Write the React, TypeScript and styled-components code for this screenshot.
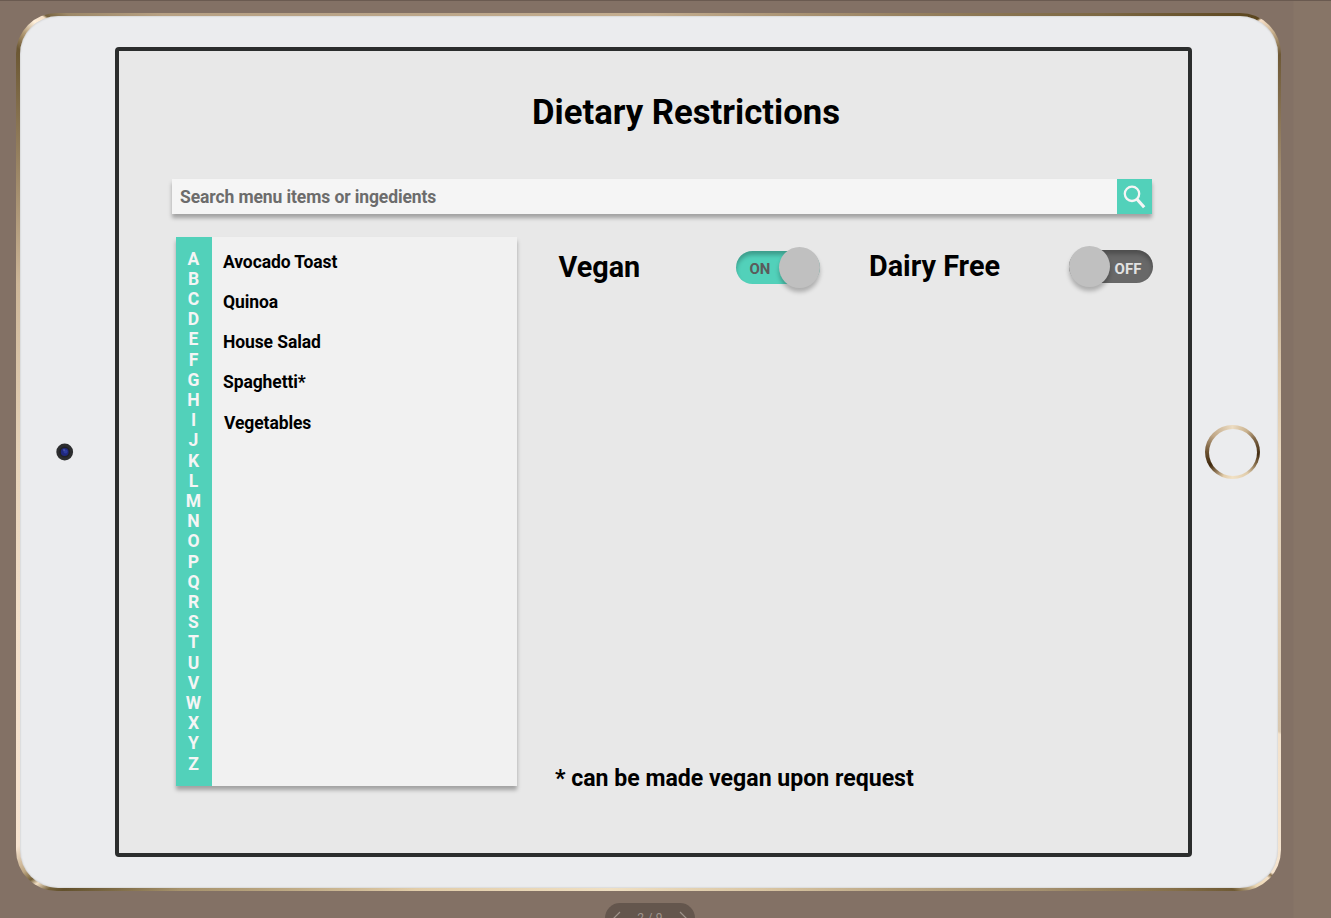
import React from "react";
import styled, { createGlobalStyle } from "styled-components";

const Global = createGlobalStyle`
  * { box-sizing: border-box; }
  html, body { margin: 0; padding: 0; overflow: hidden; }
  body { font-family: Roboto, "Liberation Sans", sans-serif; }
`;

const Page = styled.main`
  position: relative;
  height: 918px;
  padding: 12px 0 0 16px;
  overflow: hidden;
  border-top: 1px solid #6a5a50;
  background: linear-gradient(90deg, #837165 0 1293px, #877567 1294px);
`;

const Device = styled.div`
  width: 1265px;
  height: 878px;
  padding: 3px 3px 3px 4px;
  border-radius: 41px;
  background: conic-gradient(
    #c4ae90 0deg, #a08a6a 25deg, #7c6844 46deg, #5c4720 54.2deg, #5c4720 54.6deg, #f6dfc8 54.8deg, #cdb593 56deg,
    #6e5936 57.8deg, #a18c70 66deg, #d9c5a8 82deg, #ead8be 90deg, #d9c8b0 113.9deg,
    #f3e2cc 114.1deg, #f5e4cf 124deg, #8b7350 124.2deg, #f3dfc4 124.5deg, #ecd8b5 125.5deg, #6f5a34 126.8deg, #86704a 130deg,
    #a4906f 138deg, #d9c5a2 165deg, #efdfc2 185deg, #e2cda9 208deg, #a6926c 227deg, #62502c 233.2deg,
    #73603a 233.9deg, #f3e0c5 234.8deg, #75613a 235.3deg, #bda682 236.1deg, #f7e3cf 238deg, #f3dfc9 255deg, #e6d2b8 270deg, #cdb698 285deg,
    #8b7655 297deg, #6b5733 302.6deg, #b49c77 303.9deg, #fff0dc 305deg, #f4dfc6 305.7deg, #75613d 305.9deg, #9c8868 307deg, #b7a184 312deg, #b9a488 325deg, #c4ae90 360deg
  );
`;

const Face = styled.div`
  display: grid;
  grid-template-columns: 95px 1077px 1fr;
  height: 100%;
  padding-top: 31px;
  border-radius: 38px;
  background: #ebecee;
  box-shadow: inset 0 0 2px #b7b7b7;
`;

const Side = styled.div<{ $left: number; $top: number }>`
  padding: ${(p) => p.$top}px 0 0 ${(p) => p.$left}px;
  svg { display: block; }
`;

const HomeButton = styled.div`
  width: 55px;
  height: 54px;
  padding: 3.5px;
  border-radius: 50%;
  background: conic-gradient(#ecdcc2 0deg, #c8b08c 35deg, #7e6546 60deg, #432d12 95deg, #8b7250 120deg, #e0ccab 145deg, #f1e1c5 180deg, #e3cdaa 200deg, #8d7454 220deg, #3f290e 240deg, #6b5130 270deg, #c0a787 310deg, #ecdcc2 360deg);
  &::before {
    content: "";
    display: block;
    height: 100%;
    border-radius: 50%;
    background: #ebecee;
  }
`;

const Screen = styled.section`
  height: 810px;
  padding: 0 36px 0 53px;
  border: 4px solid #2b2d2d;
  border-radius: 4px;
  background: #e8e8e8;
`;

const Title = styled.h1`
  margin: 0 0 0 -7px;
  padding: 40px 0 0 55px;
  height: 128px;
  font-size: 34.7px;
  font-weight: 700;
  line-height: 42px;
  text-align: center;
  white-space: nowrap;
`;

const SearchBar = styled.div`
  display: flex;
  height: 34.5px;
  background: #f5f5f5;
  box-shadow: 0 4px 4px rgba(0, 0, 0, 0.3);
`;

const SearchInput = styled.input`
  flex: 1;
  min-width: 0;
  padding: 2px 8px 0;
  border: 0;
  background: transparent;
  font: 700 17.5px Roboto, sans-serif;
  letter-spacing: -0.1px;
  &::placeholder { color: #6c6c6c; opacity: 1; }
`;

const SearchButton = styled.button`
  width: 35px;
  padding: 0;
  border: 0;
  background: #52d1ba;
  svg { display: block; }
`;

const Content = styled.div`
  display: flex;
  margin-top: 23.5px;
  padding-left: 4px;
`;

const MenuPanel = styled.div`
  display: flex;
  flex: none;
  width: 341.4px;
  height: 549px;
  background: #f1f1f1;
  box-shadow: 0 4px 4px rgba(0, 0, 0, 0.3);
`;

const Alphabet = styled.nav`
  width: 36px;
  padding-top: 11.6px;
  background: #52d1ba;
  color: #f5f5f5;
  font-size: 17.5px;
  font-weight: 700;
  line-height: 20.2px;
  text-align: center;
  span { display: block; margin-left: -1px; }
`;

const MenuList = styled.ul`
  margin: 0;
  padding: 14.5px 0 0 11px;
  list-style: none;
  font-size: 17.5px;
  font-weight: 700;
  letter-spacing: -0.1px;
  line-height: 20px;
`;

const MenuItem = styled.li<{ $gap?: number; $indent?: number }>`
  margin-bottom: ${(p) => p.$gap ?? 20}px;
  padding-left: ${(p) => p.$indent ?? 0}px;
`;

const Filters = styled.div`
  display: flex;
  flex: 1;
  flex-direction: column;
  justify-content: space-between;
  height: 557px;
  padding-left: 37.6px;
`;

const FilterRow = styled.div`
  display: flex;
  align-items: flex-start;
  padding: 8px 0 0 3.5px;
`;

const FilterName = styled.label<{ $width: number; $top: number }>`
  flex: none;
  width: ${(p) => p.$width}px;
  padding-top: ${(p) => p.$top}px;
  font-size: 28.8px;
  font-weight: 700;
  line-height: 34px;
  white-space: nowrap;
`;

const Toggle = styled.div<{ $on?: boolean; $after?: number }>`
  display: flex;
  flex: none;
  flex-direction: ${(p) => (p.$on ? "row" : "row-reverse")};
  align-items: center;
  width: 84px;
  height: 33px;
  margin: ${(p) => (p.$on ? 6 : 5)}px ${(p) => p.$after ?? 0}px 0 0;
  border-radius: 17px;
  background: ${(p) => (p.$on ? "#52d1ba" : "#686868")};
  box-shadow: inset 0 4px 4px rgba(0, 0, 0, 0.25);
`;

const ToggleText = styled.span<{ $on?: boolean }>`
  flex: 1;
  padding: ${(p) => (p.$on ? "3px 0 0 5px" : "4px 7px 0 0")};
  color: ${(p) => (p.$on ? "#5b5b5b" : "#e2e2e2")};
  font-size: 15px;
  font-weight: 700;
  line-height: 18px;
  text-align: center;
`;

const Knob = styled.span`
  width: 41px;
  height: 41px;
  flex: none;
  border-radius: 50%;
  background: #c0c0c0;
  box-shadow: 0 4px 4px rgba(0, 0, 0, 0.25);
`;

const Footnote = styled.p`
  margin: 0;
  font-size: 23.1px;
  font-weight: 700;
  line-height: 30px;
  white-space: nowrap;
`;

const Pager = styled.div`
  position: absolute;
  left: 605px;
  top: 902px;
  display: flex;
  justify-content: space-between;
  width: 90px;
  height: 30px;
  padding: 8px 7px 0;
  border-radius: 15px;
  background: #64564d;
  color: #a0958d;
  font-size: 12px;
  letter-spacing: 0.2px;
  line-height: 14px;
`;

const letters = "ABCDEFGHIJKLMNOPQRSTUVWXYZ".split("");

const items = [
  { name: "Avocado Toast", gap: 20 },
  { name: "Quinoa", gap: 20 },
  { name: "House Salad", gap: 20 },
  { name: "Spaghetti*", gap: 21 },
  { name: "Vegetables", indent: 1 },
];

const Camera = () => (
  <svg width="18" height="18" viewBox="0 0 18 18">
    <circle cx="8.7" cy="9" r="8.4" fill="#2c2d2f" />
    <circle cx="8.7" cy="9" r="5.5" fill="#202126" />
    <circle cx="8.7" cy="9" r="3.9" fill="#20287e" />
    <circle cx="9.5" cy="8.4" r="2" fill="#2c3b9e" />
    <circle cx="8" cy="7" r=".8" fill="#6672b8" />
  </svg>
);

const SearchIcon = () => (
  <svg width="35" height="35" viewBox="0 0 35 35" fill="none" stroke="#f5f5f5">
    <circle cx="15" cy="14.8" r="7.2" strokeWidth="2.3" />
    <path d="M20 20.3 27.2 28.3" strokeWidth="3.2" />
  </svg>
);

const Chevron = ({ d }: { d: string }) => (
  <svg width="10" height="14" viewBox="0 0 10 14" fill="none" stroke="#a0958d" strokeWidth="1.2">
    <path d={d} />
  </svg>
);

export default function App() {
  return (
    <Page>
      <Global />
      <Device>
        <Face>
          <Side $left={36} $top={396}><Camera /></Side>
          <Screen>
            <Title>Dietary Restrictions</Title>
            <SearchBar>
              <SearchInput placeholder="Search menu items or ingedients" />
              <SearchButton aria-label="Search"><SearchIcon /></SearchButton>
            </SearchBar>
            <Content>
              <MenuPanel>
                <Alphabet>{letters.map((l) => <span key={l}>{l}</span>)}</Alphabet>
                <MenuList>
                  {items.map((i) => (
                    <MenuItem key={i.name} $gap={i.gap} $indent={i.indent}>{i.name}</MenuItem>
                  ))}
                </MenuList>
              </MenuPanel>
              <Filters>
                <FilterRow>
                  <FilterName $width={177.4} $top={5}>Vegan</FilterName>
                  <Toggle $on $after={49.1}><ToggleText $on>ON</ToggleText><Knob /></Toggle>
                  <FilterName $width={200} $top={4}>Dairy Free</FilterName>
                  <Toggle><ToggleText>OFF</ToggleText><Knob /></Toggle>
                </FilterRow>
                <Footnote>* can be made vegan upon request</Footnote>
              </Filters>
            </Content>
          </Screen>
          <Side $left={13} $top={378}><HomeButton /></Side>
        </Face>
      </Device>
      <Pager>
        <Chevron d="M8 1 2 7 8 13" />
        <span>2 / 9</span>
        <Chevron d="M2 1 8 7 2 13" />
      </Pager>
    </Page>
  );
}
